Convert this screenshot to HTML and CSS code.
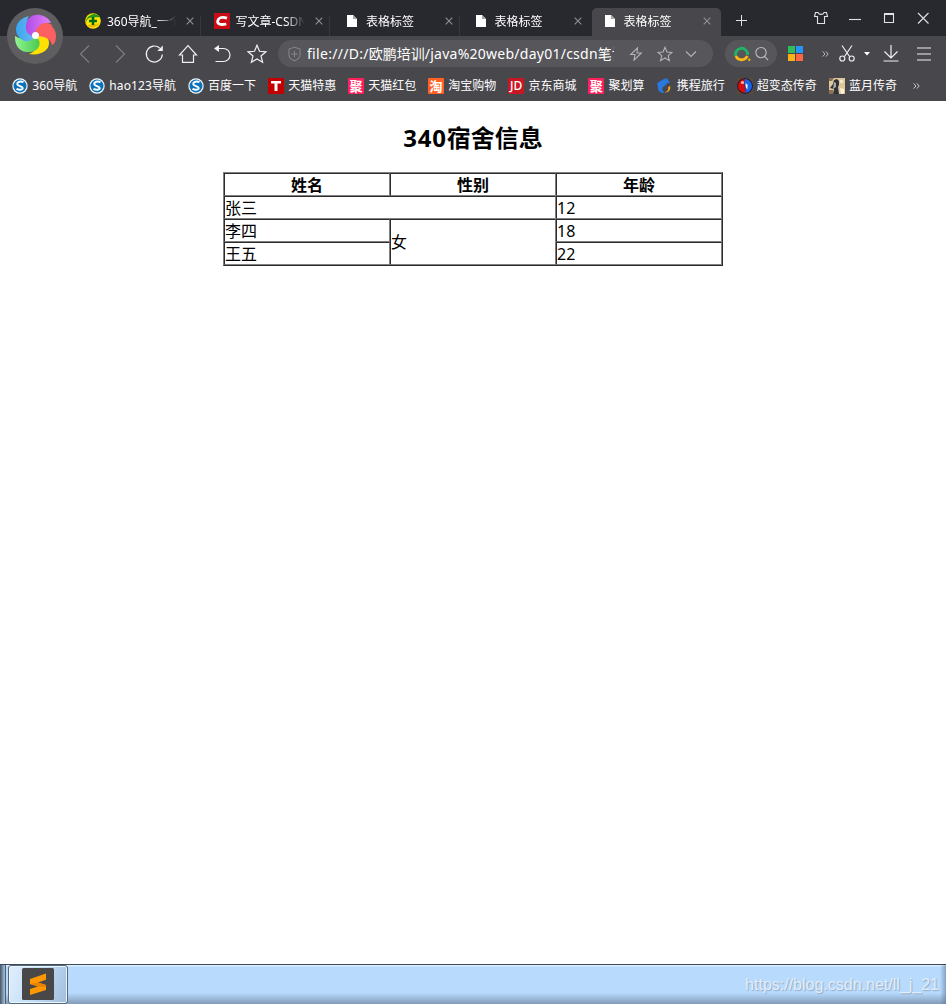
FILE: index.html
```html
<!DOCTYPE html>
<html lang="zh-CN">
<head>
<meta charset="utf-8">
<title>表格标签</title>
<link rel="stylesheet" href="styles.css">
</head>
<body>
<svg class="defs" width="0" height="0">
  <symbol id="page" viewBox="0 0 16 16"><path d="M3 2h6l4 4v8H3z" fill="#fff"/><path d="M9 2v4h4z" fill="#a5a5a8"/></symbol>
  <symbol id="x" viewBox="0 0 8 8"><path d="M.7.7l6.600 6.600M7.300.7L.7 7.300" stroke="#8f8f94" stroke-width="1.100"/></symbol>
  <symbol id="sogou" viewBox="0 0 16 16"><circle cx="8" cy="8" r="7.700" fill="#f4f6f8"/><circle cx="8" cy="8" r="6.500" fill="#0872bd"/><path d="M11.500 4.200C8.500 2.800 5.200 3.800 5.200 6c0 2.100 5.500 2.100 5.500 4.100 0 1.900-3.400 2.200-6.200.8" fill="none" stroke="#fff" stroke-width="2"/></symbol>
</svg>
<header class="chrome">
  <div class="tabs">
    <div class="tab"><svg class="fav" viewBox="0 0 16 16"><circle cx="8" cy="8" r="7.800" fill="#ffe500"/><path d="M1 10C2 2 10 5 15 4A8 8 0 0 0 1 10z" fill="#239819"/><path d="M2 12c5-1 10 1 13-3a8 8 0 0 1-13 3z" fill="#eeb500"/><path d="M8 4v8M4 8h8" stroke="#056b1a" stroke-width="2.600"/></svg><span class="name">360导航_一个</span><svg class="close"><use href="#x"/></svg></div>
    <div class="tab second"><svg class="fav" viewBox="0 0 16 16"><path d="M0 0h16v16H0z" fill="#ca0c16"/><path d="M13 5.200C7.500 3.400 4.200 5 3.700 8c-.5 3.600 3.300 4.100 8.600 3" fill="none" stroke="#fff" stroke-width="2.800"/></svg><span class="name">写文章-CSDN</span><svg class="close"><use href="#x"/></svg></div>
    <div class="tab"><svg class="fav"><use href="#page"/></svg><span class="name">表格标签</span><svg class="close"><use href="#x"/></svg></div>
    <div class="tab last"><svg class="fav"><use href="#page"/></svg><span class="name">表格标签</span><svg class="close"><use href="#x"/></svg></div>
    <div class="tab active"><svg class="fav"><use href="#page"/></svg><span class="name">表格标签</span><svg class="close"><use href="#x"/></svg></div>
    <svg class="plus" viewBox="0 0 12 12"><path d="M6 0v12M0 6h12" stroke="#e2e2e4" stroke-width="1.100"/></svg>
    <div class="window-buttons">
      <svg viewBox="0 0 16 16"><path d="M5 2.500H2.500L1.500 6.500h3v7h7v-7h3l-1-4H11C10.500 5 5.500 5 5 2.500z"/></svg>
      <svg viewBox="0 0 16 16"><path d="M2 9.500h12"/></svg>
      <svg viewBox="0 0 16 16"><path d="M3.500 3.500h9v9h-9zM3.500 4.500h9"/></svg>
      <svg viewBox="0 0 16 16"><path d="M3 3l10.500 10.500M13.500 3L3 13.500"/></svg>
    </div>
  </div>
  <div class="toolbar">
    <div class="nav">
      <svg class="dim" viewBox="0 0 20 20"><path d="M14 1.500L5.500 10l8.500 8.500"/></svg>
      <svg class="dim" viewBox="0 0 20 20"><path d="M7 1.500L15.500 10 7 18.500"/></svg>
      <svg viewBox="0 0 20 20"><path d="M18.300 10.500A8 8 0 1 1 15.800 4.200"/><path d="M18.800 1.500v5.500h-5.500z" fill="#f0f0f0" stroke="none"/></svg>
      <svg viewBox="0 0 20 20"><path d="M1.500 11L10 1.700 18.500 11H15.500v7.300h-11V11z"/></svg>
      <svg viewBox="0 0 20 20"><path d="M3 4.500h8.500a6.500 6.500 0 0 1 0 13H3.500"/><path d="M7 1v7L2 4.500z" fill="#f0f0f0" stroke="none"/></svg>
      <svg viewBox="0 0 20 20"><path d="M10 1.200l2.500 6.100 6.500.5-5 4.200 1.600 6.300L10 14.900l-5.600 3.400L6 12 1 7.800l6.500-.5z"/></svg>
    </div>
    <div class="address">
      <svg class="shield" viewBox="0 0 14 16"><path d="M7 .7l6 2v6c0 3.600-3 5.400-6 6.600-3-1.200-6-3-6-6.600v-6zM7 4.500v7M3.500 8h7"/></svg>
      <div class="url"><span class="u1">file:///D:/</span>欧鹏培训<span class="u2">/java%20web/day01/csdn</span>笔记</div>
      <svg class="a1" viewBox="0 0 14 14"><path d="M8.500.8L1.700 7.500H6L5 13.200 12.300 6H8z"/></svg>
      <svg class="a2" viewBox="0 0 16 16"><path d="M8 1.300l2 4.700 5 .4-3.800 3.300 1.200 4.900L8 12l-4.400 2.600 1.200-4.900L1 6.400 6 6z"/></svg>
      <svg class="a3" viewBox="0 0 12 12"><path d="M1 3.500l5 5 5-5"/></svg>
    </div>
    <div class="search">
      <svg viewBox="0 0 18 16"><path d="M1.800 10A6 6 0 1 1 13.500 9" fill="none" stroke="#20b464" stroke-width="2.800"/><path d="M2 10c2 5 9 5 11.300 0" fill="none" stroke="#fcb813" stroke-width="2.800"/><circle cx="15.200" cy="13.800" r="1.200" fill="#fcb813"/></svg>
      <svg viewBox="0 0 16 16"><g fill="none" stroke="#bababd" stroke-width="1.200"><circle cx="7.500" cy="6.500" r="5.500"/><path d="M11.300 10.500l3.700 4"/></g></svg>
    </div>
    <svg class="grid" viewBox="0 0 15 15"><path d="M0 0h7v7H0z" fill="#2dbd60"/><path d="M8 0h7v7H8z" fill="#2894fa"/><path d="M0 8h7v7H0z" fill="#feb116"/><path d="M8 8h7v7H8z" fill="#ff6543"/></svg>
    <svg class="chev" viewBox="0 0 7 6"><path d="M.6.4L3 3 .6 5.600M3.800.4L6.200 3 3.800 5.600"/></svg>
    <svg class="cut" viewBox="0 0 16 17"><path d="M3 .5l7.500 11M13 .5L5.500 11.500"/><circle cx="3.300" cy="13.500" r="2.500"/><circle cx="12.700" cy="13.500" r="2.500"/></svg>
    <svg class="caret" viewBox="0 0 6 4"><path d="M0 0h6L3 3.500z"/></svg>
    <svg class="down" viewBox="0 0 16 17"><path d="M8 0v13M1.500 6.500L8 13l6.500-6.500M.5 16h15"/></svg>
    <svg class="menu" viewBox="0 0 14 14"><path d="M0 1h14M0 7h14M0 13h14"/></svg>
  </div>
  <nav class="bookmarks">
    <a><svg class="fav"><use href="#sogou"/></svg><span><i>360</i>导航</span></a>
    <a><svg class="fav"><use href="#sogou"/></svg><span><i>hao123</i>导航</span></a>
    <a><svg class="fav"><use href="#sogou"/></svg><span>百度一下</span></a>
    <a><b class="fav tm"><svg viewBox="0 0 16 16"><path d="M3 3h10v2.500H9.500V13h-3V5.500H3z" fill="#fff"/></svg></b><span>天猫特惠</span></a>
    <a><b class="fav ju">聚</b><span>天猫红包</span></a>
    <a><b class="fav tao">淘</b><span>淘宝购物</span></a>
    <a><b class="fav jd">JD</b><span>京东商城</span></a>
    <a><b class="fav ju">聚</b><span>聚划算</span></a>
    <a><svg class="fav" viewBox="0 0 16 16"><path d="M.8 6C3 3 5 3 6.500 2 9 0 12 .3 12 2l2 2.500-3 .7C9 8 7 8.500 6.500 10c-.5 2 .5 3 2 5C4 15.500 1 12 2 8z" fill="#2878df"/><path d="M14.200 8c.7 5-2.500 7-6 6.300 3-.6 4.300-2 4-5.300z" fill="#f4a51b"/></svg><span>携程旅行</span></a>
    <a><svg class="fav" viewBox="0 0 16 16"><path d="M0 0h16v16H0z" fill="#5b4939"/><circle cx="8" cy="8" r="7.800" fill="#15102b"/><path d="M8 1a7 7 0 0 0 0 14c2-4-2-7 0-14z" fill="#d90c0c"/><path d="M8 1a7 7 0 0 1 0 14c2-5-2-8 0-14z" fill="#1764e8"/><circle cx="5.500" cy="4.500" r="1.600" fill="#ffb9a0"/><path d="M8.500 5.500c3 0 2 3 2 6-1.500-1-2-3-2-6z" fill="#e4f5ff"/></svg><span>超变态传奇</span></a>
    <a><svg class="fav" viewBox="0 0 16 16"><path d="M0 0h16v16H0z" fill="#ddc79c"/><path d="M0 0h5L3 3H0zM0 12h4v4H0z" fill="#8a7253"/><path d="M5 2l3-1 2 2v4l-1 2 1 7H4l1-5-4-1 3-4z" fill="#303237"/><path d="M5 4l2 1v4l-3 2z" fill="#a9aaa7"/><path d="M11 10l4 1v4l-3 1z" fill="#fff0d5"/><path d="M11 2h3v3h-3z" fill="#f8e8c5"/></svg><span>蓝月传奇</span></a>
    <svg class="more" viewBox="0 0 7 6"><path d="M.6.4L3 3 .6 5.600M3.800.4L6.200 3 3.800 5.600"/></svg>
  </nav>
  <svg class="logo" viewBox="0 0 56 56">
    <defs>
      <linearGradient id="purple"><stop stop-color="#b04be6"/><stop offset="1" stop-color="#e283fb"/></linearGradient>
      <linearGradient id="blue"><stop stop-color="#36a6f2"/><stop offset="1" stop-color="#70b7ee"/></linearGradient>
      <linearGradient id="green"><stop stop-color="#91f392"/><stop offset="1" stop-color="#48c950"/></linearGradient>
    </defs>
    <circle cx="28" cy="28" r="28" fill="#5e5e60"/>
    <path d="M28 28c8-4 14 0 14 7 0 8-9 13-20 11 6-2 9-7 6-18z" fill="#ffe000"/>
    <path d="M28 28c6 4 6 10 1 14-7 4-16 2-19-4-2-4-2-7-2-10 4 3 12 4 20 0z" fill="url(#green)"/>
    <path d="M28 28C25 34 18 35 13 30 6 24 8 11 22 8c-3 3-3 14 6 20z" fill="url(#blue)"/>
    <path d="M28 28c-2-7 3-13 10-13 7 1 11 7 11 13 0 5-2 9-4 9-1-6-7-9-17-9z" fill="#fc6060"/>
    <path d="M28 28c-7 0-10-5-9-11C20 9 27 6 33 7c6 1 10 5 11 8-8-1-15 4-16 13z" fill="url(#purple)"/>
    <path d="M28 28c0-8 5-13 11-13 3 0 5 1 7 3-7-1-13 2-18 10z" fill="#fc6060"/>
    <circle cx="28.500" cy="27.500" r="3.500" fill="#fff"/>
  </svg>
</header>
<main class="content">
  <h2><i>340</i>宿舍信息</h2>
  <table>
    <tr><th>姓名</th><th>性别</th><th>年龄</th></tr>
    <tr><td colspan="2">张三</td><td>12</td></tr>
    <tr><td>李四</td><td class="span" rowspan="2">女</td><td>18</td></tr>
    <tr><td>王五</td><td>22</td></tr>
  </table>
</main>
<footer class="taskbar">
  <div class="stub"></div>
  <div class="task"><svg viewBox="0 0 32 32"><rect width="32" height="32" rx="1.500" fill="#484848"/><path d="M8 11L24 5.500v6.300L16 14.500l8 2.500v5L8 27v-6l8-2.500L8 16z" fill="#ff9800"/><path d="M8 16l8-1.500 8 2.500v2l-8-.5z" fill="#e98200"/></svg></div>
  <span class="watermark">https://blog.csdn.net/ll_j_21</span>
</footer>
</body>
</html>
```
FILE: styles.css
```css
* { box-sizing: border-box; }
body {
  margin: 0;
  height: 1004px;
  display: flex;
  flex-direction: column;
  background: #fff;
  color: #000;
  overflow: hidden;
  font-family: "Noto Sans", "Noto Sans CJK SC", sans-serif;
}
i { font-style: normal; }
svg { display: block; flex: none; }
.defs { position: absolute; }
.chrome { position: relative; height: 101px; background: #48474c; color: #fff; font-size: 12px; }
.logo { position: absolute; left: 7px; top: 8px; width: 56px; height: 56px; }

.tabs { display: flex; height: 36px; padding: 8px 0 0 71px; background: #28282f; }
.tab { position: relative; display: flex; align-items: center; width: 129.500px; height: 28px; padding-left: 14px; flex: none; }
.tab:not(.last):not(.active)::after { content: ""; position: absolute; right: 0; top: 8px; width: 1px; height: 20px; background: #37373e; }
.tab.second { padding-left: 13px; }
.tab.last { width: 132px; padding-left: 13px; }
.tab.active { width: 129px; padding-left: 10px; background: #48474c; border-radius: 5px 5px 0 0; }
.fav { width: 16px; height: 16px; flex: none; }
.tab .fav { margin-top: -2px; }
.name { width: 69px; margin-left: 6px; overflow: hidden; white-space: nowrap; line-height: 18px; -webkit-mask-image: linear-gradient(90deg, #000 72%, transparent); mask-image: linear-gradient(90deg, #000 72%, transparent); }
.close { width: 8px; height: 8px; margin: -3px 0 0 10px; }
.plus { width: 11px; height: 11px; margin: 7px 0 0 15px; }
.window-buttons { display: flex; gap: 18px; margin: 2px 0 0 auto; padding-right: 15.500px; }
.window-buttons svg { width: 16px; height: 16px; fill: none; stroke: #e2e2e4; stroke-width: 1.100; }

.toolbar { display: flex; align-items: center; height: 35px; padding-left: 68px; }
.toolbar svg { fill: none; stroke: #f0f0f0; stroke-width: 1.200; }
.nav { display: flex; width: 210px; }
.nav svg { width: 20px; height: 20px; margin: 0 7.150px; }
.nav .dim { stroke: #7d7d81; }
.address { display: flex; align-items: center; width: 435px; height: 27px; padding-left: 10px; border-radius: 14px; background: #57565b; }
.address svg { stroke: #b4b4b8; stroke-width: 1.100; }
.address .shield { width: 13px; height: 16px; stroke: #858589; }
.url { width: 307px; margin-left: 6px; overflow: hidden; white-space: nowrap; font-size: 14px; line-height: 22px; }
.u1 { letter-spacing: .3px; }
.u2 { letter-spacing: .25px; }
.a1 { width: 14px; height: 14px; margin-left: 15px; }
.a2 { width: 16px; height: 16px; margin-left: 13.500px; }
.a3 { width: 12px; height: 12px; margin-left: 12.500px; }
.search { display: flex; align-items: center; gap: 2px; width: 52px; height: 27px; margin-left: 12px; padding-left: 9px; border-radius: 14px; background: #57565b; }
.search svg { width: 18px; height: 16px; stroke: none; }
.search svg + svg { width: 15px; }
.toolbar .grid { width: 15px; height: 15px; margin-left: 11px; stroke: none; }
.toolbar .chev { width: 7px; height: 6px; margin-left: 19px; stroke: #bbb; stroke-width: 1; }
.cut { width: 16px; height: 17px; margin-left: 9.500px; }
.toolbar .caret { width: 6px; height: 4px; margin-left: 9.500px; fill: #fff; stroke: none; }
.down { width: 16px; height: 17px; margin-left: 13px; }
.menu { width: 14px; height: 14px; margin-left: 18px; }

.bookmarks { display: flex; align-items: center; gap: 11.800px; height: 30px; padding-left: 12px; }
.bookmarks a { display: flex; align-items: center; gap: 4.300px; white-space: nowrap; line-height: 18px; }
.bookmarks i { letter-spacing: .1px; }
b.fav { display: flex; align-items: center; justify-content: center; border-radius: 1px; font-size: 13px; line-height: 16px; overflow: hidden; }
b.fav svg { width: 16px; height: 16px; }
.tm { background: #c40000; }
.ju { background: #ff1f5b; }
.tao { background: #ff6025; border-radius: 3px; }
b.jd { background: #c81623; font-weight: 500; font-size: 12px; }
.more { width: 7px; height: 6px; margin-left: 4px; fill: none; stroke: #ccc; stroke-width: 1; }

.content { flex: 1; display: flex; flex-direction: column; align-items: center; }
h2 { margin: 19px 0 0; font-size: 24px; line-height: 36px; }
h2 i { letter-spacing: .7px; }
table { width: 500px; margin-top: 16px; table-layout: fixed; border-spacing: 0; border: 1px solid; border-color: #808080 #2c2c2c #2c2c2c #808080; font-size: 16px; }
td, th { height: 23px; padding: 1px 0 0; line-height: 20px; border: 1px solid; border-color: #2c2c2c #808080 #808080 #2c2c2c; }
.span { padding: 0; }

.taskbar { display: flex; height: 40px; border-top: 1px solid #3d4a57; background: linear-gradient(90deg, transparent 940px, #52729088), linear-gradient(#dcefff 0 1px, #b8dafd 2px 28px, #829bb7 39px); }
.stub { width: 6px; border-right: 1px solid #4e5f70; background: linear-gradient(90deg, #465667, #a9c4de); }
.task { display: flex; align-items: center; justify-content: center; width: 60px; margin-left: 2px; padding-bottom: 2px; border: 1px solid #556779; border-radius: 3px; box-shadow: inset 0 0 0 1px #e9f5ff; background: linear-gradient(110deg, #e1effd, #c2ddf8 50%, #a1bddb); }
.task svg { width: 32px; height: 32px; }
.watermark { margin: 10px 7px 0 auto; font: 16px/20px "Liberation Sans", Arial, sans-serif; color: #e1edfa; text-shadow: 1px 1px 1px #91abc4; }
```
